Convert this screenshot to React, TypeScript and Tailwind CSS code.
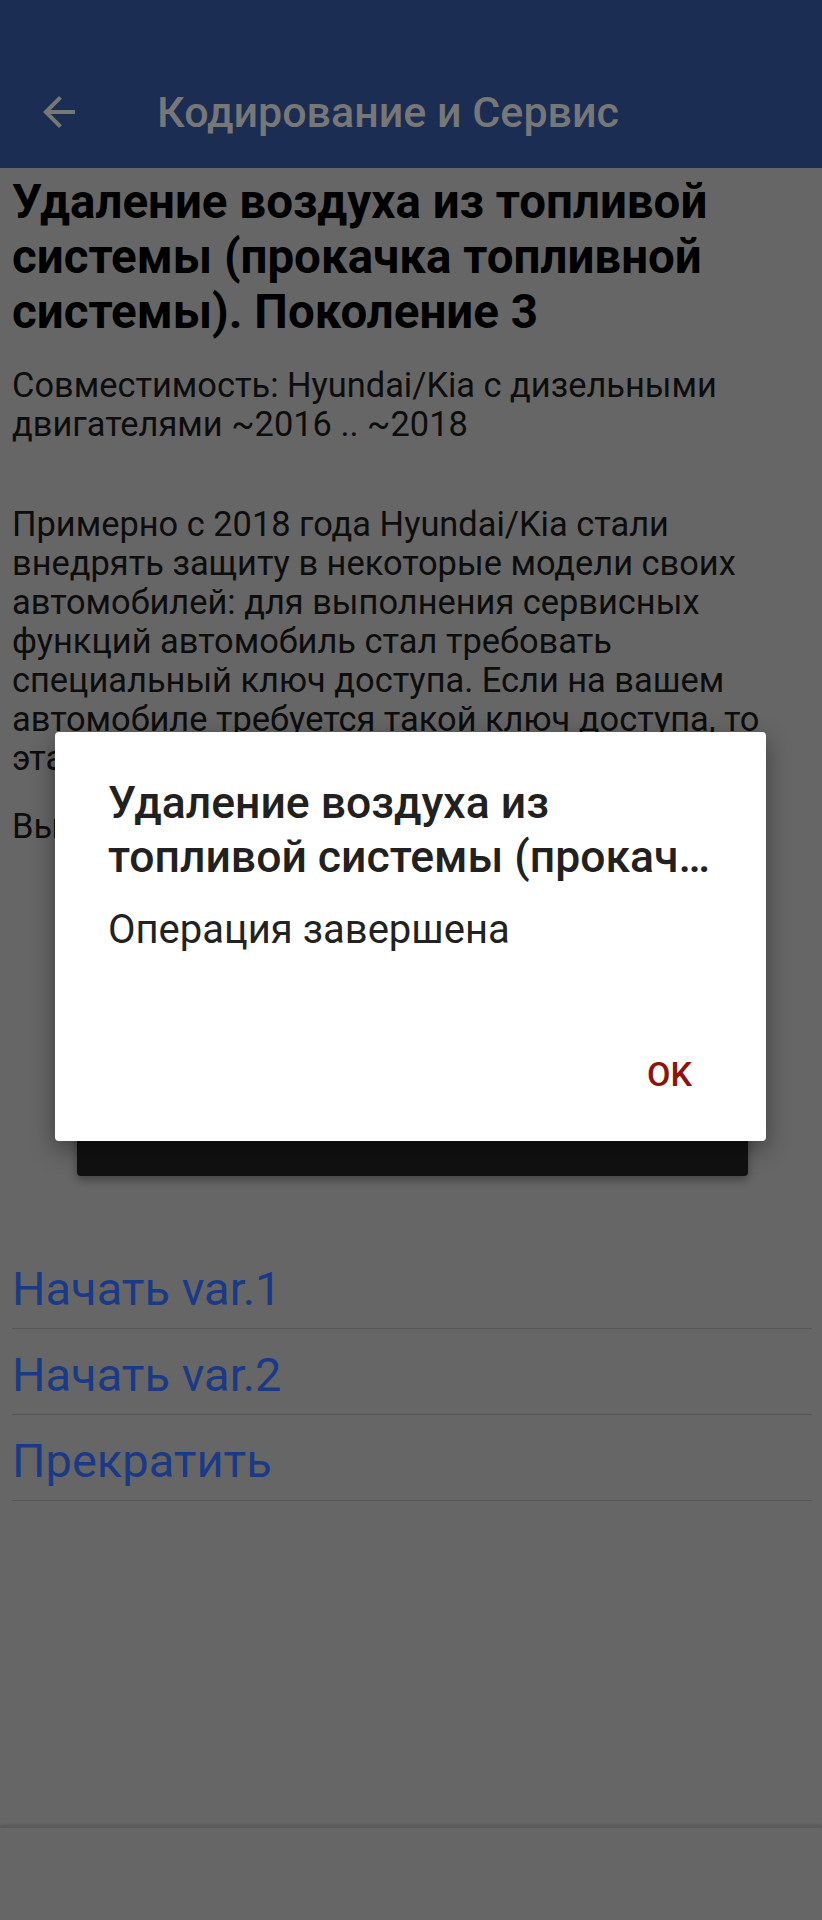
import React from "react";

const ArrowBack = () => (
  <svg width="48" height="48" viewBox="0 0 24 24" fill="#777777">
    <path d="M20 11H7.83l5.59-5.59L12 4l-8 8 8 8 1.41-1.41L7.83 13H20v-2z" />
  </svg>
);

const actions = ["Начать var.1", "Начать var.2", "Прекратить"];

const App = () => {
  return (
    <div
      className="relative flex flex-col h-[1920px] w-full bg-[#666666] overflow-hidden"
      style={{ fontFamily: "Roboto, 'Noto Sans', sans-serif" }}
    >
      {/* app bar */}
      <header className="h-[168px] bg-[#1b2d52] pt-[56px]">
        <div className="flex items-center h-[112px]">
          <div className="ml-[35px]">
            <ArrowBack />
          </div>
          <h1 className="ml-[74px] text-[43px] font-medium text-[#777777] leading-none">
            Кодирование и Сервис
          </h1>
        </div>
      </header>

      <main className="flex-1 pl-[12px] pr-[10px] text-[#0d0d0d]">
        <h2 className="mt-[7px] text-[47.5px] leading-[55px] font-bold text-black">
          Удаление воздуха из топливой
          <br />
          системы (прокачка топливной
          <br />
          системы). Поколение 3
        </h2>
        <p className="mt-[26px] text-[34.4px] leading-[39px]">
          Совместимость: Hyundai/Kia с дизельными
          <br />
          двигателями ~2016 .. ~2018
        </p>
        <p className="mt-[61px] text-[34.4px] leading-[39px]">
          Примерно с 2018 года Hyundai/Kia стали
          <br />
          внедрять защиту в некоторые модели своих
          <br />
          автомобилей: для выполнения сервисных
          <br />
          функций автомобиль стал требовать
          <br />
          специальный ключ доступа. Если на вашем
          <br />
          автомобиле требуется такой ключ доступа, то
          <br />
          эта функция может не работать.
        </p>
        <p className="mt-[29px] text-[34.4px] leading-[39px]">
          Выберите вариант запуска:
        </p>

        <div className="mt-[24px] ml-[65px] mr-[64px] h-[306px] rounded-[4px] bg-[#111111] shadow-[0_4px_10px_rgba(0,0,0,0.35)]" />

        <ul className="mt-[67px]">
          {actions.map((a) => (
            <li
              key={a}
              className="pt-[20px] pb-[13px] border-b border-[#555555] text-[47px] leading-[52px] text-[#1b3a85]"
            >
              {a}
            </li>
          ))}
        </ul>
      </main>

      <footer className="h-[94px] border-t-2 border-[#5a5a5a] shadow-[0_-1px_3px_rgba(0,0,0,0.15)]" />

      {/* dialog */}
      <div className="absolute left-[55px] top-[732px] w-[711px] h-[409px] rounded-[4px] bg-white shadow-[0_8px_24px_rgba(0,0,0,0.4)] flex flex-col pl-[53px] pr-[50px] pt-[44px]">
        <div className="text-[44.5px] leading-[54px] font-medium text-[#212121]">
          <div>Удаление воздуха из</div>
          <div className="truncate">
            топливой системы (прокачка топливной системы). Поколение 3
          </div>
        </div>
        <div className="mt-[25px] text-[40px] leading-[42px] text-[#222222]">
          Операция завершена
        </div>
        <div className="mt-auto mb-[47px] flex justify-end">
          <button className="pr-[24px] text-[34px] leading-[40px] font-medium uppercase text-[#8d1209]">
            OK
          </button>
        </div>
      </div>
    </div>
  );
};

export default App;
